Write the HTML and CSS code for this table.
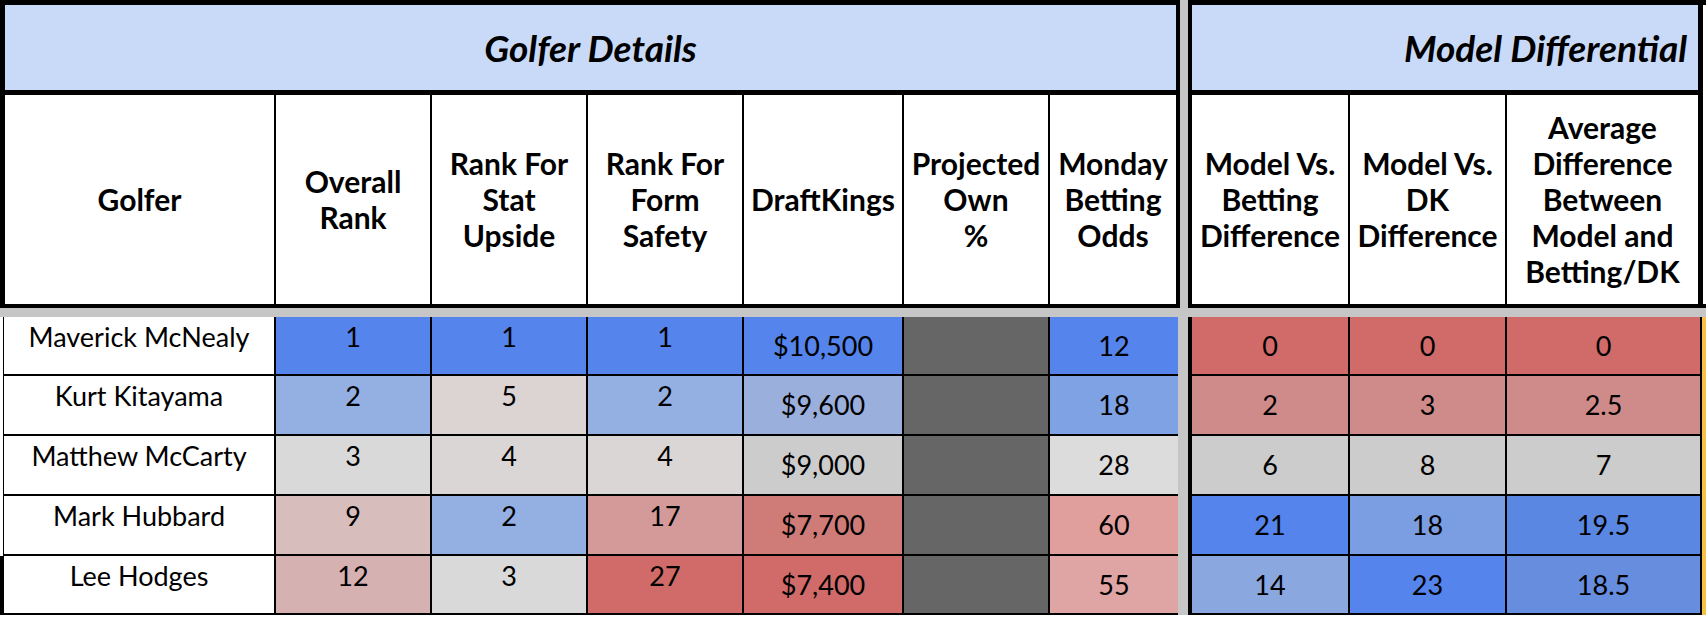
FILE: index.html
```html
<!DOCTYPE html>
<html lang="en">
<head>
<meta charset="utf-8">
<title>Golfer Details</title>
<link rel="stylesheet" href="styles.css">
</head>
<body>
<div class="sheet">
  <div class="top">
    <section class="hblock hleft">
      <div class="title title-center">Golfer Details</div>
      <div class="hrow hrow-left">
        <div class="hc">Golfer</div>
        <div class="hc">Overall<br>Rank</div>
        <div class="hc">Rank For<br>Stat<br>Upside</div>
        <div class="hc">Rank For<br>Form<br>Safety</div>
        <div class="hc">DraftKings</div>
        <div class="hc">Projected<br>Own<br>%</div>
        <div class="hc">Monday<br>Betting<br>Odds</div>
      </div>
    </section>
    <section class="hblock hright">
      <div class="title title-right">Model Differential</div>
      <div class="hrow hrow-right">
        <div class="hc">Model Vs.<br>Betting<br>Difference</div>
        <div class="hc">Model Vs.<br>DK<br>Difference</div>
        <div class="hc">Average<br>Difference<br>Between<br>Model and<br>Betting/DK</div>
      </div>
    </section>
    <div class="hsliver"></div>
  </div>
  <div class="band"></div>
  <div class="bottom">
    <div class="dgrid dleft">
      <div class="dc name up">Maverick McNealy</div>
      <div class="dc up c-b1">1</div>
      <div class="dc up c-b1">1</div>
      <div class="dc up c-b1">1</div>
      <div class="dc c-b1">$10,500</div>
      <div class="dc own"></div>
      <div class="dc last c-b1">12</div>

      <div class="dc name up">Kurt Kitayama</div>
      <div class="dc up c-b2">2</div>
      <div class="dc up c-p0">5</div>
      <div class="dc up c-b2">2</div>
      <div class="dc c-b3">$9,600</div>
      <div class="dc own"></div>
      <div class="dc last c-b4">18</div>

      <div class="dc name up">Matthew McCarty</div>
      <div class="dc up c-g1">3</div>
      <div class="dc up c-g2">4</div>
      <div class="dc up c-g2">4</div>
      <div class="dc c-g3">$9,000</div>
      <div class="dc own"></div>
      <div class="dc last c-g4">28</div>

      <div class="dc name up">Mark Hubbard</div>
      <div class="dc up c-p1">9</div>
      <div class="dc up c-b2">2</div>
      <div class="dc up c-p2">17</div>
      <div class="dc c-r2">$7,700</div>
      <div class="dc own"></div>
      <div class="dc last c-p3">60</div>

      <div class="dc name up thick">Lee Hodges</div>
      <div class="dc up c-p4">12</div>
      <div class="dc up c-g1">3</div>
      <div class="dc up c-r1">27</div>
      <div class="dc c-r1">$7,400</div>
      <div class="dc own"></div>
      <div class="dc last c-p5">55</div>
    </div>
    <div class="dgrid dright">
      <div class="dc c-r1">0</div>
      <div class="dc c-r1">0</div>
      <div class="dc c-r1">0</div>

      <div class="dc c-r3">2</div>
      <div class="dc c-r3">3</div>
      <div class="dc c-r3">2.5</div>

      <div class="dc c-g3">6</div>
      <div class="dc c-g3">8</div>
      <div class="dc c-g3">7</div>

      <div class="dc c-b1">21</div>
      <div class="dc c-b5">18</div>
      <div class="dc c-b6">19.5</div>

      <div class="dc c-b7">14</div>
      <div class="dc c-b1">23</div>
      <div class="dc c-b8">18.5</div>
    </div>
    <div class="ysliver"></div>
  </div>
</div>
</body>
</html>
```

FILE: styles.css
```css
html, body {
  margin: 0;
  padding: 0;
  background: #ffffff;
}

body {
  font-family: "Lato", "Liberation Sans", sans-serif;
  color: #000000;
  width: 1706px;
  height: 618px;
  overflow: hidden;
}

.sheet {
  width: 1706px;
  display: flex;
  flex-direction: column;
  background: #c6c6c6;
}

.top {
  display: flex;
  height: 308px;
}

.hblock {
  box-sizing: border-box;
  display: flex;
  flex-direction: column;
  background: #ffffff;
  border-top: 5px solid #000;
  border-bottom: 4px solid #000;
}

.hleft {
  width: 1180px;
  margin-right: 8px;
  border-left: 5px solid #000;
  border-right: 4px solid #000;
}

.hright {
  width: 515px;
  border-left: 4px solid #000;
  border-right: 5px solid #000;
}

.hsliver {
  box-sizing: border-box;
  width: 3px;
  background: #ffffff;
  border-top: 5px solid #000;
  border-bottom: 4px solid #000;
}

.title {
  box-sizing: border-box;
  height: 90px;
  background: #c9daf8;
  border-bottom: 5px solid #000;
  display: flex;
  align-items: center;
  font-weight: 700;
  font-style: italic;
  font-size: 37px;
}

.title-center {
  justify-content: center;
}

.title-right {
  justify-content: flex-end;
  padding-right: 11px;
}

.hrow {
  flex: 1;
  display: grid;
}

.hrow-left {
  grid-template-columns: 271px 156px 156px 156px 160px 146px 126px;
}

.hrow-right {
  grid-template-columns: 158px 157px 191px;
}

.hc {
  box-sizing: border-box;
  border-right: 2px solid #000;
  display: flex;
  align-items: center;
  justify-content: center;
  text-align: center;
  font-weight: 700;
  font-size: 30px;
  line-height: 36px;
  padding-bottom: 2px;
}

.hc:last-child {
  border-right: none;
}

.band {
  height: 9px;
}

.bottom {
  display: flex;
  height: 298px;
}

.dgrid {
  display: grid;
  grid-template-rows: 59px 60px 60px 60px 59px;
  background: #ffffff;
}

.dleft {
  width: 1178px;
  margin-right: 10px;
  grid-template-columns: 276px 156px 156px 156px 160px 146px 128px;
}

.dright {
  box-sizing: border-box;
  width: 514px;
  border-left: 4px solid #000;
  grid-template-columns: 158px 157px 195px;
}

.dc {
  box-sizing: border-box;
  border-right: 2px solid #000;
  border-bottom: 2px solid #000;
  display: flex;
  align-items: center;
  justify-content: center;
  font-size: 27px;
  line-height: 30px;
}

.dc.up {
  align-items: flex-start;
  padding-top: 5px;
}

.dc.last {
  border-right: none;
}

.dc.name {
  margin-left: 3px;
  border-left: 1px solid #000;
}

.dc.name.thick {
  margin-left: 0;
  border-left: 4px solid #000;
}

.dc.own { background-color: #666666; }

.c-b1 { background-color: #5484ec; }
.c-b2 { background-color: #94afe2; }
.c-b3 { background-color: #9aafdc; }
.c-b4 { background-color: #7fa2e5; }
.c-b5 { background-color: #7b9de2; }
.c-b6 { background-color: #5a87e2; }
.c-b7 { background-color: #8aa8df; }
.c-b8 { background-color: #678ddf; }
.c-g1 { background-color: #d9d9d9; }
.c-g2 { background-color: #dad6d6; }
.c-g3 { background-color: #cccccc; }
.c-g4 { background-color: #dcdcdc; }
.c-p0 { background-color: #dcd3d3; }
.c-p1 { background-color: #d8bdbd; }
.c-p2 { background-color: #d49a9a; }
.c-p3 { background-color: #e09f9d; }
.c-p4 { background-color: #d6b1b1; }
.c-p5 { background-color: #dfa5a4; }
.c-r1 { background-color: #d16b69; }
.c-r2 { background-color: #cf7b78; }
.c-r3 { background-color: #cf8b8a; }

.ysliver {
  width: 4px;
  background: #f4c246;
}
```
